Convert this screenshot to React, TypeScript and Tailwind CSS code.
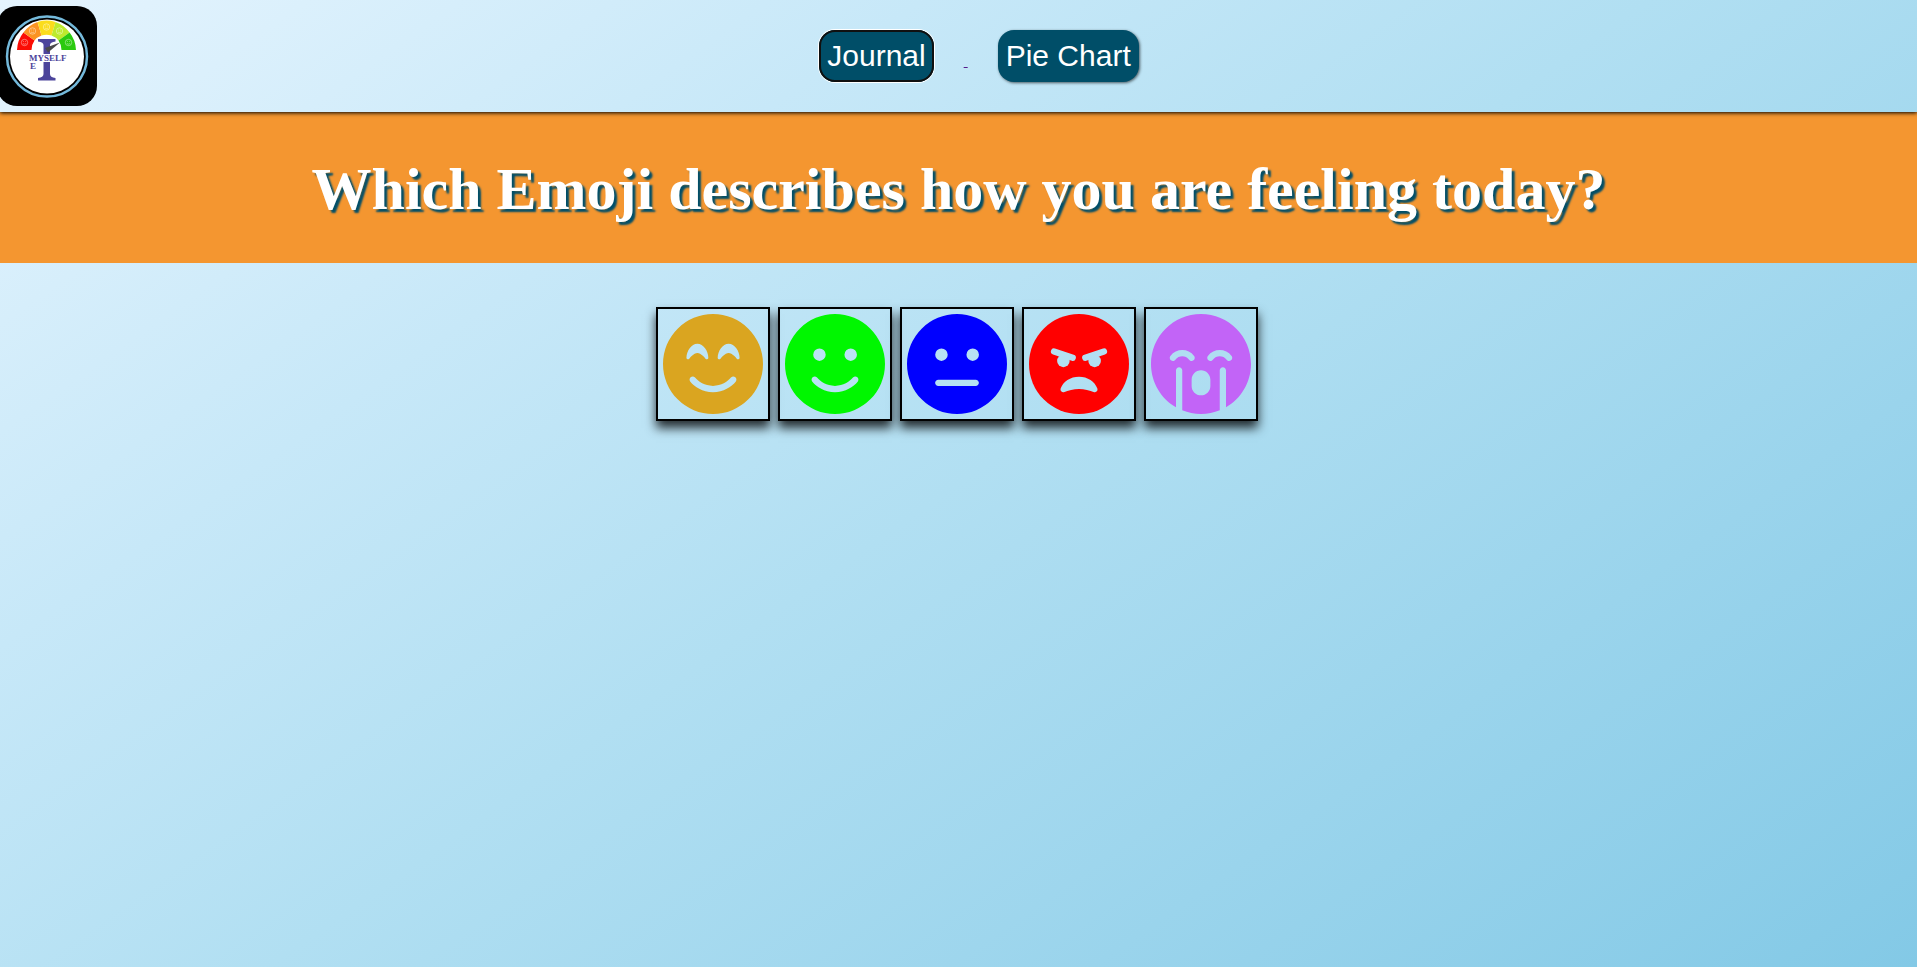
import type { ComponentType } from "react";
import {
  FaFaceSmileBeam,
  FaFaceSmile,
  FaFaceMeh,
  FaFaceSadCry,
} from "react-icons/fa6";

type IconProps = { className?: string };

function AngryFace({ className }: IconProps) {
  return (
    <svg viewBox="0 0 512 512" className={className} aria-hidden="true">
      <mask id="angry-features">
        <rect width="512" height="512" fill="#fff" />
        <circle cx="176" cy="240" r="32" />
        <circle cx="336" cy="240" r="32" />
        <path d="M128 192 L224 224 M384 192 L288 224" stroke="#000" strokeWidth="32" strokeLinecap="round" />
        <path d="M162 382 C174 346 212 321 256 321 C300 321 338 346 350 382 C354 394 344 403 334 400 C310 391 284 384 256 384 C228 384 202 391 178 400 C168 403 158 394 162 382 Z" />
      </mask>
      <circle cx="256" cy="256" r="256" fill="currentColor" mask="url(#angry-features)" />
    </svg>
  );
}

type Mood = {
  label: string;
  color: string;
  Icon: ComponentType<IconProps>;
};

const moods: Mood[] = [
  { label: "Great", color: "text-[#daa520]", Icon: FaFaceSmileBeam },
  { label: "Good", color: "text-[#00f700]", Icon: FaFaceSmile },
  { label: "Neutral", color: "text-[#0000ff]", Icon: FaFaceMeh },
  { label: "Angry", color: "text-[#ff0000]", Icon: AngryFace },
  { label: "Sad", color: "text-[#c264f7]", Icon: FaFaceSadCry },
];

const gauge = [
  { d: "M17 50 A30 30 0 0 1 23.4 32.5 L34.5 40.5 A16 16 0 0 0 31.5 50 Z", fill: "#fb0d05", x: 24.5, y: 42.5 },
  { d: "M23.4 32.5 A30 30 0 0 1 37.5 22 L41.5 35.5 A16 16 0 0 0 34.5 40.5 Z", fill: "#fb9323", x: 32.5, y: 31 },
  { d: "M37.5 22 A30 30 0 0 1 55.5 22 L51.5 35.5 A16 16 0 0 0 41.5 35.5 Z", fill: "#fbdc1c", x: 46.5, y: 27 },
  { d: "M55.5 22 A30 30 0 0 1 69.6 32.5 L58.5 40.5 A16 16 0 0 0 51.5 35.5 Z", fill: "#bdea2d", x: 59.5, y: 31 },
  { d: "M69.6 32.5 A30 30 0 0 1 76 50 L61.5 50 A16 16 0 0 0 58.5 40.5 Z", fill: "#2bc90f", x: 68.5, y: 42.5 },
];

function Logo() {
  return (
    <svg
      viewBox="-3 6 100 100"
      className="-ml-[3px] size-[100px] shrink-0 rounded-[20px] bg-black"
      role="img"
      aria-label="I Myself"
    >
      <circle cx="47" cy="56.5" r="40" fill="#000" stroke="#74b9db" strokeWidth="2.5" />
      <circle cx="47" cy="56.5" r="37" fill="#fff" />
      {gauge.map((part) => (
        <g key={part.fill}>
          <path d={part.d} fill={part.fill} />
          <g fill="none" stroke="#fff" strokeOpacity="0.6" strokeWidth="0.7">
            <circle cx={part.x} cy={part.y} r="3.2" />
            <path d={`M${part.x - 1.6} ${part.y + 1} q1.6 1.4 3.2 0 M${part.x - 1.4} ${part.y - 1} h.8 M${part.x + 0.6} ${part.y - 1} h.8`} />
          </g>
        </g>
      ))}
      <path
        d="M38 39 H55.5 V41.5 Q50 42 50 45 V74 Q50 77.5 55.5 78 V80.5 H38 V78 Q43.5 77.5 43.5 74 V45 Q43.5 42 38 41.5 Z"
        fill="#4c449b"
      />
      <rect x="28" y="54" width="38" height="8" fill="#fff" />
      <path d="M45 48 L60 42.5 L48 52.5 Z" fill="#4a4a4a" />
      <g fontSize="9" fontWeight="700" fontFamily="Liberation Serif, serif" fill="#4c449b">
        <text x="29" y="61">MYSELF</text>
        <text x="30" y="69">E</text>
      </g>
    </svg>
  );
}

const navButton =
  "rounded-2xl bg-[#004e68] px-2 py-2 font-['Liberation_Sans',sans-serif] text-[30px] leading-9 text-white";

export default function App() {
  return (
    <div className="flex min-h-screen flex-col bg-[linear-gradient(145deg,#e5f4fe_0%,#c7e8f8_28%,#b1dff2_50%,#83c9e6_100%)] font-['Liberation_Serif',serif]">
      <header className="relative flex items-center py-1.5 shadow-[0_1px_4px_#000]">
        <Logo />
        <nav className="flex flex-1 items-center justify-center pr-14">
          <button
            type="button"
            className={`${navButton} shadow-[0_0_0_1px_#fff] outline-2 -outline-offset-2 outline-[#101010]`}
          >
            Journal
          </button>
          <a href="#journal" aria-label="Journal" className="mx-[30px] pt-2.5 text-base text-[#551a8b] underline">
            &nbsp;
          </a>
          <button type="button" className={`${navButton} shadow-[1px_1px_3px_#00000099]`}>
            Pie Chart
          </button>
        </nav>
      </header>
      <main>
        <h1 className="bg-[#f49630] pt-[43px] pb-[39px] text-center text-[60px] leading-[69px] font-bold text-white [text-shadow:3px_3px_2px_#004e68]">
          Which Emoji describes how you are feeling today?
        </h1>
        <div className="mt-11 mr-1 flex justify-center gap-2">
          {moods.map(({ label, color, Icon }) => (
            <button
              key={label}
              type="button"
              aria-label={label}
              className={`border-2 border-black p-[5px] shadow-[0_7px_10px_#000000cc] ${color}`}
            >
              <Icon className="size-[100px]" />
            </button>
          ))}
        </div>
      </main>
    </div>
  );
}
